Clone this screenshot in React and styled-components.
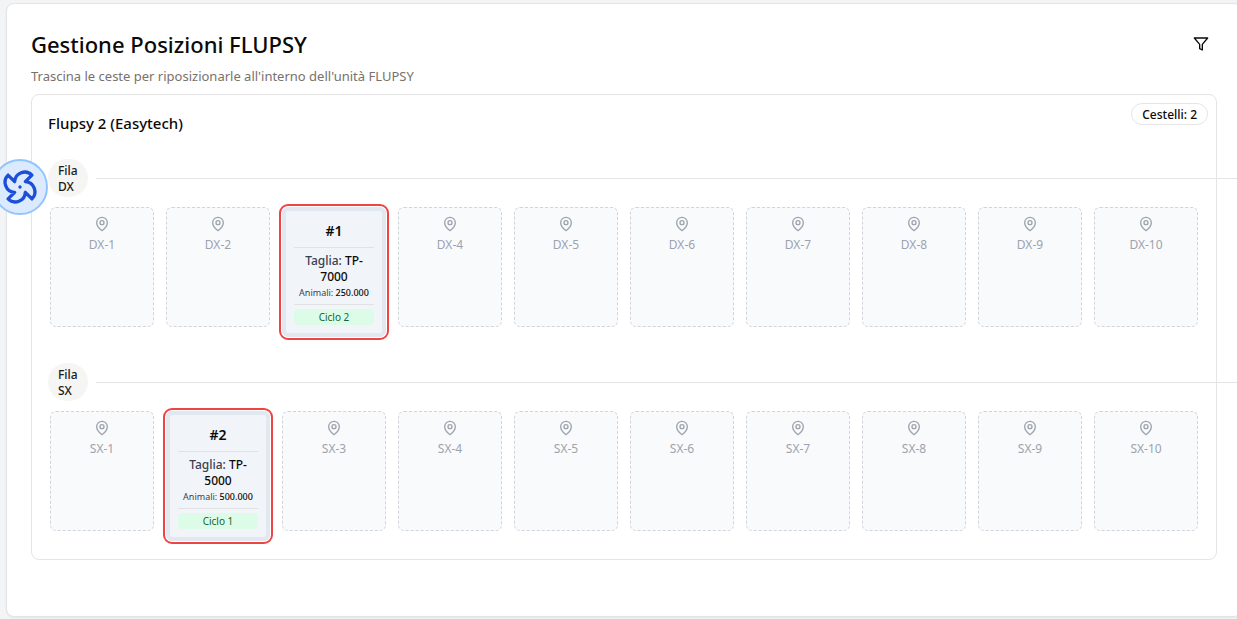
import React from "react";
import styled, { createGlobalStyle } from "styled-components";

const GlobalStyle = createGlobalStyle`
  *, *::before, *::after { box-sizing: border-box; }
  body {
    margin: 0;
    overflow-x: hidden;
    background: #f3f4f6;
    color: #0c0a09;
    font-family: "Segoe UI", "Noto Sans", "Open Sans", sans-serif;
  }
  h1, h2, h3, h4, p, ul { margin: 0; padding: 0; }
  ul { list-style: none; }
  button { font: inherit; color: inherit; cursor: pointer; }
`;

const Page = styled.main`
  padding: 3px 0 2px 6px;
  overflow: hidden;
`;

const Card = styled.section`
  margin-right: -5px;
  padding: 24px 24px 56px;
  background: #ffffff;
  border: 1px solid #e4e4e7;
  border-radius: 8px;
  box-shadow: 0 1px 2px rgba(0, 0, 0, 0.06);
`;

const Header = styled.header`
  display: flex;
  align-items: center;
  justify-content: space-between;
`;

const Title = styled.h1`
  font-size: 22px;
  line-height: 32px;
  font-weight: 500;
`;

const IconButton = styled.button`
  display: flex;
  align-items: center;
  justify-content: center;
  width: 32px;
  height: 32px;
  padding: 0;
  border: 0;
  border-radius: 6px;
  background: transparent;
`;

const Subtitle = styled.p`
  margin-top: 6px;
  font-size: 13px;
  line-height: 20px;
  color: #78716c;
`;

const Panel = styled.section`
  position: relative;
  margin-top: 8px;
  padding: 16px;
  border: 1px solid #e5e5e5;
  border-radius: 8px;
`;

const PanelTitle = styled.h2`
  font-size: 15px;
  line-height: 24px;
  font-weight: 500;
`;

const CountBadge = styled.span`
  position: absolute;
  top: 8px;
  right: 8px;
  padding: 3px 10px 1px;
  border: 1px solid #e5e5e5;
  border-radius: 11px;
  background: #ffffff;
  font-size: 12px;
  line-height: 16px;
  font-weight: 500;
`;

const Lane = styled.section`
  margin-top: 24px;
`;

const LaneHeader = styled.div`
  display: flex;
  align-items: center;
  gap: 8px;
`;

const LaneLabel = styled.h3`
  width: min-content;
  padding: 4px 10px 2px;
  border-radius: 19px;
  background: #f5f5f4;
  color: #1c1917;
  font-size: 12px;
  line-height: 16px;
  font-weight: 500;
`;

const LaneRule = styled.div`
  flex: 0 0 100%;
  height: 1px;
  background: #e5e5e5;
`;

const Slots = styled.ul`
  display: grid;
  grid-template-columns: repeat(10, minmax(0, 1fr));
  align-items: start;
  gap: 8px;
  margin-top: 8px;
`;

const Cell = styled.li`
  padding: 2px;
`;

const EmptySlot = styled.div`
  display: flex;
  flex-direction: column;
  align-items: center;
  gap: 5px;
  height: 120px;
  padding: 8px;
  border: 1px dashed #d1d5db;
  border-radius: 6px;
  background: #f9fafb;
  color: #9ca3af;
  font-size: 12px;
  line-height: 16px;
`;

const Basket = styled.article`
  padding: 8px;
  border: 4px solid #e2e8f0;
  border-radius: 6px;
  outline: 2px solid #ef4444;
  outline-offset: 1px;
  background: #f1f5f9;
  text-align: center;
  cursor: grab;
`;

const BasketName = styled.h4`
  padding-bottom: 4px;
  border-bottom: 1px solid #e2e2e2;
  font-size: 14px;
  line-height: 24px;
  font-weight: 600;
`;

const SizeLine = styled.p`
  margin-top: 5px;
  font-size: 12px;
  line-height: 16px;
  font-weight: 500;
  color: #374151;
`;

const AnimalsLine = styled.p`
  padding-bottom: 3px;
  border-bottom: 1px solid #e2e2e2;
  font-size: 9px;
  line-height: 16px;
  color: #374151;
  white-space: nowrap;
`;

const Value = styled.span`
  color: #0c0a09;
  font-weight: 500;
`;

const Cycle = styled.p`
  margin-top: 4px;
  border-radius: 4px;
  background: #dcfce7;
  color: #166534;
  font-size: 10px;
  line-height: 16px;
`;

const FanButton = styled.button`
  position: fixed;
  top: 159px;
  left: -8px;
  display: flex;
  align-items: center;
  justify-content: center;
  width: 56px;
  height: 56px;
  padding: 0;
  border: 2px solid #93c5fd;
  border-radius: 50%;
  background: #dbeafe;
  color: #1d4ed8;
`;

const Icon = ({ size = 16, children }) => (
  <svg
    width={size}
    height={size}
    viewBox="0 0 24 24"
    fill="none"
    stroke="currentColor"
    strokeWidth="2"
    strokeLinecap="round"
    strokeLinejoin="round"
    aria-hidden="true"
  >
    {children}
  </svg>
);

const FilterIcon = () => (
  <Icon>
    <polygon points="22 3 2 3 10 12.46 10 19 14 21 14 12.46 22 3" />
  </Icon>
);

const PinIcon = () => (
  <Icon>
    <path d="M20 10c0 6-8 12-8 12s-8-6-8-12a8 8 0 0 1 16 0Z" />
    <circle cx="12" cy="10" r="3" />
  </Icon>
);

const FanIcon = () => (
  <Icon size={40}>
    <g transform="rotate(30 12 12)">
      <path d="M10.827 16.379a6.082 6.082 0 0 1-8.618-7.002l5.412 1.45a6.082 6.082 0 0 1 7.002-8.618l-1.45 5.412a6.082 6.082 0 0 1 8.618 7.002l-5.412-1.45a6.082 6.082 0 0 1-7.002 8.618l1.45-5.412Z" />
      <path d="M12 12v.01" />
    </g>
  </Icon>
);

const lanes = [
  { side: "DX", baskets: { 3: { id: 1, size: "TP-7000", animals: "250.000", cycle: 2 } } },
  { side: "SX", baskets: { 2: { id: 2, size: "TP-5000", animals: "500.000", cycle: 1 } } },
];

const positions = Array.from({ length: 10 }, (_, i) => i + 1);

function BasketCard({ basket }) {
  return (
    <Basket draggable>
      <BasketName>#{basket.id}</BasketName>
      <SizeLine>
        Taglia: <Value>{basket.size}</Value>
      </SizeLine>
      <AnimalsLine>
        Animali: <Value>{basket.animals}</Value>
      </AnimalsLine>
      <Cycle>Ciclo {basket.cycle}</Cycle>
    </Basket>
  );
}

export default function App() {
  return (
    <>
      <GlobalStyle />
      <Page>
        <Card>
          <Header>
            <Title>Gestione Posizioni FLUPSY</Title>
            <IconButton type="button" aria-label="Filtra">
              <FilterIcon />
            </IconButton>
          </Header>
          <Subtitle>Trascina le ceste per riposizionarle all'interno dell'unità FLUPSY</Subtitle>
          <Panel>
            <PanelTitle>Flupsy 2 (Easytech)</PanelTitle>
            <CountBadge>Cestelli: 2</CountBadge>
            {lanes.map(({ side, baskets }) => (
              <Lane key={side}>
                <LaneHeader>
                  <LaneLabel>Fila {side}</LaneLabel>
                  <LaneRule />
                </LaneHeader>
                <Slots>
                  {positions.map((n) => (
                    <Cell key={n}>
                      {baskets[n] ? (
                        <BasketCard basket={baskets[n]} />
                      ) : (
                        <EmptySlot>
                          <PinIcon />
                          <span>
                            {side}-{n}
                          </span>
                        </EmptySlot>
                      )}
                    </Cell>
                  ))}
                </Slots>
              </Lane>
            ))}
          </Panel>
        </Card>
      </Page>
      <FanButton type="button" aria-label="Apri il menu FLUPSY">
        <FanIcon />
      </FanButton>
    </>
  );
}
